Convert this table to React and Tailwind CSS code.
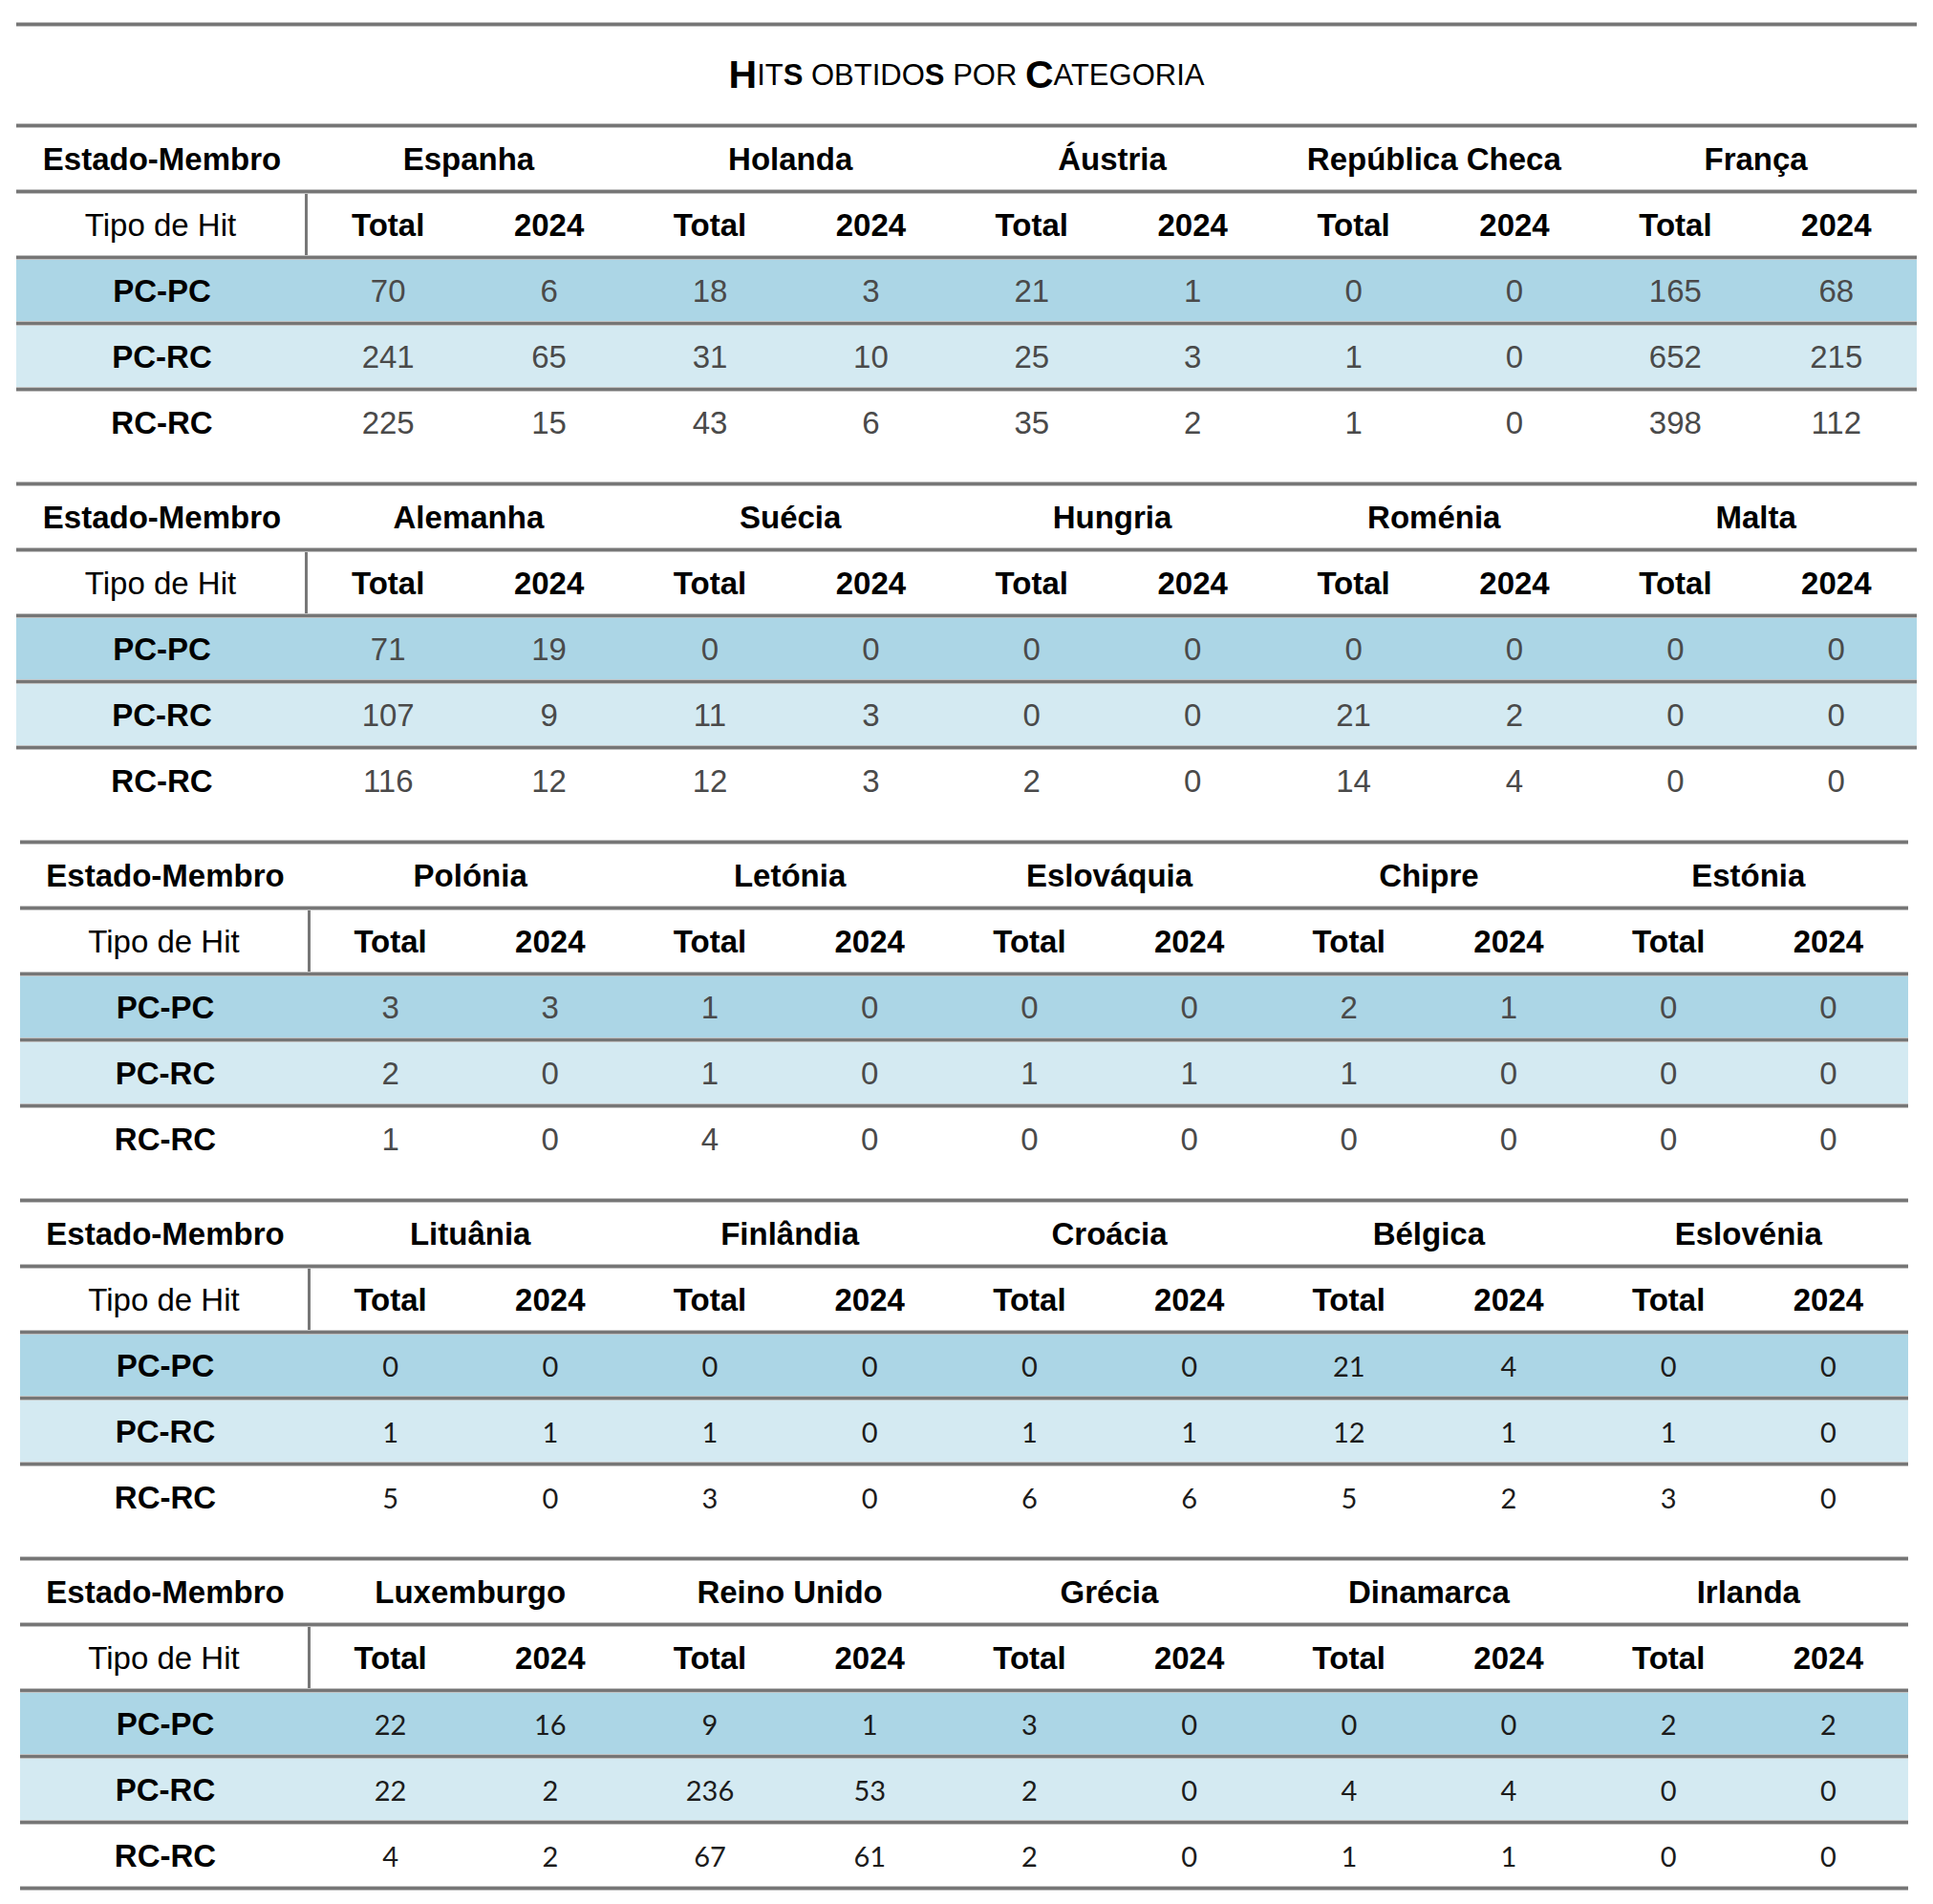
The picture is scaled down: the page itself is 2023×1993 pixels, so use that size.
import React from 'react';

const blocks = [
  {
    countries: ['Espanha', 'Holanda', 'Áustria', 'República Checa', 'França'],
    rows: [
      [70, 6, 18, 3, 21, 1, 0, 0, 165, 68],
      [241, 65, 31, 10, 25, 3, 1, 0, 652, 215],
      [225, 15, 43, 6, 35, 2, 1, 0, 398, 112],
    ],
  },
  {
    countries: ['Alemanha', 'Suécia', 'Hungria', 'Roménia', 'Malta'],
    rows: [
      [71, 19, 0, 0, 0, 0, 0, 0, 0, 0],
      [107, 9, 11, 3, 0, 0, 21, 2, 0, 0],
      [116, 12, 12, 3, 2, 0, 14, 4, 0, 0],
    ],
  },
  {
    countries: ['Polónia', 'Letónia', 'Eslováquia', 'Chipre', 'Estónia'],
    rows: [
      [3, 3, 1, 0, 0, 0, 2, 1, 0, 0],
      [2, 0, 1, 0, 1, 1, 1, 0, 0, 0],
      [1, 0, 4, 0, 0, 0, 0, 0, 0, 0],
    ],
  },
  {
    countries: ['Lituânia', 'Finlândia', 'Croácia', 'Bélgica', 'Eslovénia'],
    rows: [
      [0, 0, 0, 0, 0, 0, 21, 4, 0, 0],
      [1, 1, 1, 0, 1, 1, 12, 1, 1, 0],
      [5, 0, 3, 0, 6, 6, 5, 2, 3, 0],
    ],
  },
  {
    countries: ['Luxemburgo', 'Reino Unido', 'Grécia', 'Dinamarca', 'Irlanda'],
    rows: [
      [22, 16, 9, 1, 3, 0, 0, 0, 2, 2],
      [22, 2, 236, 53, 2, 0, 4, 4, 0, 0],
      [4, 2, 67, 61, 2, 0, 1, 1, 0, 0],
    ],
  },
];

const rowMeta = [
  { label: 'PC-PC', bg: 'bg-[#acd6e6]' },
  { label: 'PC-RC', bg: 'bg-[#d4eaf2]' },
  { label: 'RC-RC', bg: 'bg-white' },
];

const Rule = () => (
  <div className="h-[5px] bg-[#767676] border-y border-[#c0c0c0]" />
);

const Block = ({ block, index }) => {
  const wide = index < 2;
  const calibriLike = index > 2;
  const grid = wide
    ? 'grid grid-cols-[305px_repeat(10,minmax(0,1fr))] h-[64px]'
    : 'grid grid-cols-[304px_repeat(10,minmax(0,1fr))] h-[64px]';
  const numCls = calibriLike
    ? "font-['Lato'] text-[29px] text-[#1c1c1c]"
    : 'text-[33px] text-[#4a4a4a]';

  return (
    <section className={wide ? 'ml-[17px] w-[1989px]' : 'ml-[21px] w-[1976px]'}>
      <Rule />
      {/* country header */}
      <div className={`${grid} items-center font-bold text-[33px] text-black`}>
        <div className="text-center">Estado-Membro</div>
        {block.countries.map((c) => (
          <div key={c} className="col-span-2 text-center">{c}</div>
        ))}
      </div>
      <Rule />
      {/* sub header */}
      <div className={`${grid} text-[33px] text-black`}>
        <div className="flex items-center justify-center border-r-[3px] border-[#777]">Tipo de Hit</div>
        {block.countries.map((c) => (
          <React.Fragment key={c}>
            <div className="flex items-center justify-center font-bold">Total</div>
            <div className="flex items-center justify-center font-bold">2024</div>
          </React.Fragment>
        ))}
      </div>
      {block.rows.map((vals, r) => (
        <React.Fragment key={r}>
          <Rule />
          <div className={`${grid} items-center ${rowMeta[r].bg}`}>
            <div className="text-center font-bold text-[33px] text-black">{rowMeta[r].label}</div>
            {vals.map((v, i) => (
              <div key={i} className={`text-center ${numCls}`}>{v}</div>
            ))}
          </div>
        </React.Fragment>
      ))}
      {index === blocks.length - 1 && <Rule />}
    </section>
  );
};

export default function App() {
  return (
    <div className="w-[2023px] min-h-[1993px] bg-white font-['Liberation_Sans',Arial,sans-serif] leading-none">
      <div className="pt-[23px] ml-[17px] w-[1989px]">
        <Rule />
        <h1 className="h-[101px] flex items-center justify-center text-black">
          <span className="text-[41px] font-bold">H</span>
          <span className="text-[31px] uppercase">it<b>s</b> obtido<b>s</b> por&nbsp;</span>
          <span className="text-[41px] font-bold">C</span>
          <span className="text-[31px] uppercase">ategoria</span>
        </h1>
      </div>
      <div className="flex flex-col gap-[30px]">
        {blocks.map((b, i) => (
          <Block key={i} block={b} index={i} />
        ))}
      </div>
    </div>
  );
}
